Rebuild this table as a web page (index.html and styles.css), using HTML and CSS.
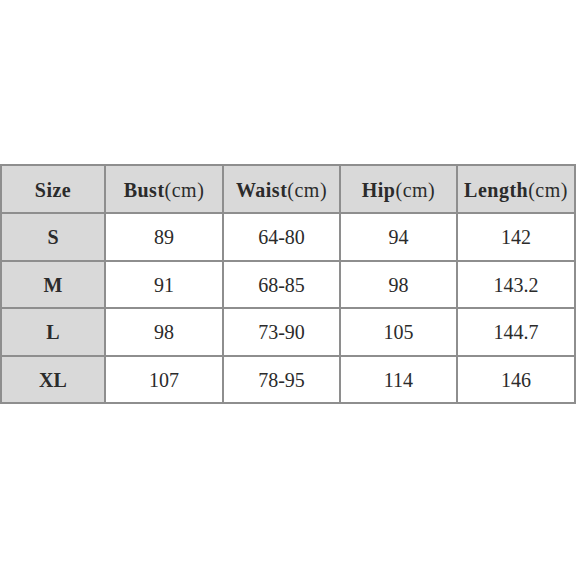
FILE: index.html
```html
<!DOCTYPE html>
<html>
<head>
<meta charset="utf-8">
<link rel="stylesheet" href="styles.css">
</head>
<body>
<div class="page">
<table class="sizes">
<colgroup>
<col class="c1"><col class="c2"><col class="c3"><col class="c4"><col class="c5">
</colgroup>
<thead>
<tr class="head">
<th>Size</th>
<th>Bust<span class="u">(cm)</span></th>
<th>Waist<span class="u">(cm)</span></th>
<th>Hip<span class="u">(cm)</span></th>
<th>Length<span class="u">(cm)</span></th>
</tr>
</thead>
<tbody>
<tr><th>S</th><td>89</td><td>64-80</td><td>94</td><td>142</td></tr>
<tr><th>M</th><td>91</td><td>68-85</td><td>98</td><td>143.2</td></tr>
<tr><th>L</th><td>98</td><td>73-90</td><td>105</td><td>144.7</td></tr>
<tr><th>XL</th><td>107</td><td>78-95</td><td>114</td><td>146</td></tr>
</tbody>
</table>
</div>
</body>
</html>
```
FILE: styles.css
```css
html, body {
  margin: 0;
  padding: 0;
  background: #ffffff;
}
.page {
  padding-top: 164px;
  padding-left: 0;
}
.sizes {
  border-collapse: collapse;
  table-layout: fixed;
  width: 574px;
  font-family: "Liberation Serif", "Times New Roman", serif;
  font-size: 20px;
  color: #2b2b2b;
}
.c1 { width: 104px; }
.c2 { width: 118px; }
.c3 { width: 117px; }
.c4 { width: 117px; }
.c5 { width: 118px; }
.sizes th, .sizes td {
  border: 2px solid #8e8e8e;
  text-align: center;
  vertical-align: middle;
  padding: 2px 0 0 0;
  height: 43.5px;
}
.sizes .head th {
  height: 44px;
  background: #d9d9d9;
  font-weight: bold;
  letter-spacing: 0.5px;
}
.sizes .head th .u {
  font-weight: normal;
  letter-spacing: 0.5px;
}
.sizes tbody th {
  background: #d9d9d9;
  font-weight: bold;
}
.sizes td {
  background: #ffffff;
  font-weight: normal;
}
```
